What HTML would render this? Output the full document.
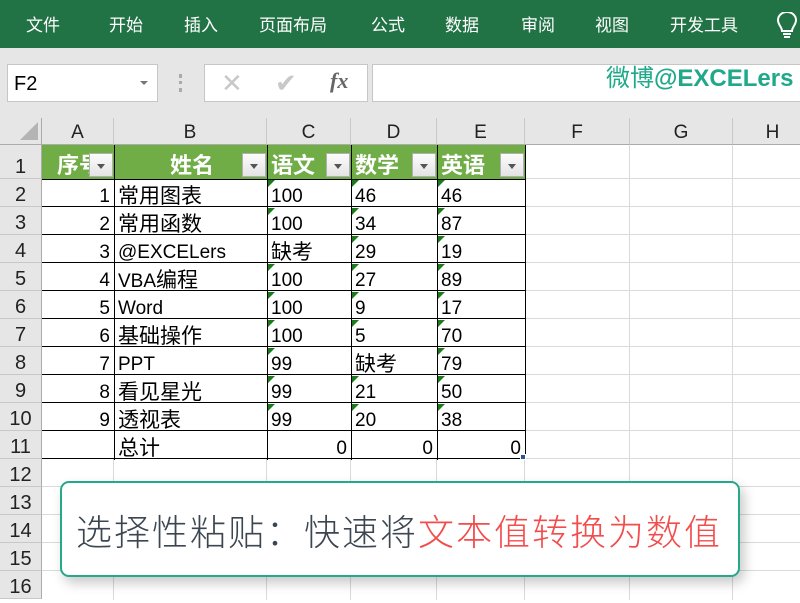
<!DOCTYPE html>
<html><head><meta charset="utf-8">
<style>
*{margin:0;padding:0;box-sizing:border-box}
body{width:800px;height:600px;overflow:hidden;background:#fff;position:relative;font-family:"Liberation Sans","Noto Sans CJK SC",sans-serif}
.a{position:absolute}
#rib{left:0;top:0;width:800px;height:48px;background:#217346}
.rt{position:absolute;top:15px;color:#fff;font-size:17px;line-height:22px}
#gray{left:0;top:48px;width:800px;height:70px;background:#e6e6e6}
.box{position:absolute;background:#fff;border:1px solid #c6c6c6}
.ch{position:absolute;top:118px;height:27px;background:#e6e6e6;border-right:1px solid #c8c8c8;border-bottom:1px solid #ababab;text-align:center;font-size:19px;line-height:30px;color:#222}
.rh{position:absolute;left:0;width:42px;height:28px;background:#e6e6e6;border-bottom:1px solid #c8c8c8;border-right:1px solid #ababab;text-align:center;font-size:20px;line-height:32px;color:#222}
.gv{position:absolute;top:145px;width:1px;height:455px;background:#dadada}
.gh{position:absolute;left:42px;width:758px;height:1px;background:#dadada}
.c{position:absolute;height:28px;font-size:19px;line-height:35px;color:#000;white-space:nowrap;overflow:hidden}
.z{font-size:21px}
.tri{position:absolute;width:0;height:0;border-top:7px solid #1b7b1b;border-right:7px solid transparent}
.dd{position:absolute;top:153px;width:24px;height:24px;background:linear-gradient(#fcfcfc,#e4e4e4);border:1px solid #b0b0b0}
.dd:after{content:"";position:absolute;left:7px;top:10px;border-top:5px solid #555;border-left:4.5px solid transparent;border-right:4.5px solid transparent}
.hd{position:absolute;top:145px;height:34px;color:#fff;font-size:22px;font-weight:bold;line-height:42px;white-space:nowrap;overflow:hidden}
</style></head><body>
<div id="rib" class="a"></div>
<div class="rt" style="left:26px">文件</div>
<div class="rt" style="left:109px">开始</div>
<div class="rt" style="left:184px">插入</div>
<div class="rt" style="left:259px">页面布局</div>
<div class="rt" style="left:371px">公式</div>
<div class="rt" style="left:445px">数据</div>
<div class="rt" style="left:521px">审阅</div>
<div class="rt" style="left:595px">视图</div>
<div class="rt" style="left:670px">开发工具</div>
<svg class="a" style="left:776px;top:12px" width="22" height="28" viewBox="0 0 22 28"><path d="M6 19 C6 15 2 13 2 8 A9 8 0 0 1 20 8 C20 13 16 15 16 19 Z M7 22 H15 M8 25 H14" fill="none" stroke="#fff" stroke-width="2"/></svg>
<div id="gray" class="a"></div>
<div class="box" style="left:7px;top:64px;width:151px;height:38px"></div>
<div class="a" style="left:14px;top:73px;font-size:20px">F2</div>
<div class="a" style="left:140px;top:81px;border-top:4px solid #777;border-left:4px solid transparent;border-right:4px solid transparent"></div>
<div class="a" style="left:179px;top:74px;width:3px;height:18px;border-left:3px dotted #aaa"></div>
<div class="box" style="left:204px;top:64px;width:164px;height:38px"></div>
<div class="a" style="left:221px;top:68px;font-size:26px;color:#c8c8c8">✕</div>
<div class="a" style="left:275px;top:68px;font-size:26px;color:#c8c8c8">✔</div>
<div class="a" style="left:330px;top:68px;font-size:22px;color:#666;font-family:'Liberation Serif',serif;font-style:italic;font-weight:bold">fx</div>
<div class="box" style="left:372px;top:64px;width:430px;height:38px"></div>
<div class="a" style="left:606px;top:64px;font-size:24px;color:#1fa88a;font-weight:bold;line-height:30px"><span style="font-weight:normal">微博</span>@EXCELers</div>
<div class="a" style="left:0;top:118px;width:42px;height:27px;background:#e6e6e6;border-right:1px solid #ababab;border-bottom:1px solid #ababab"></div>
<div class="a" style="left:20px;top:122px;border-bottom:18px solid #b4b4b4;border-left:18px solid transparent"></div>
<div class="ch" style="left:42px;width:72px">A</div>
<div class="ch" style="left:114px;width:153px">B</div>
<div class="ch" style="left:267px;width:84px">C</div>
<div class="ch" style="left:351px;width:86px">D</div>
<div class="ch" style="left:437px;width:88px">E</div>
<div class="ch" style="left:525px;width:105px">F</div>
<div class="ch" style="left:630px;width:103px">G</div>
<div class="ch" style="left:733px;width:80px">H</div>
<div class="rh" style="top:145px;height:34px;line-height:44px">1</div>
<div class="rh" style="top:179px">2</div><div class="rh" style="top:207px">3</div><div class="rh" style="top:235px">4</div><div class="rh" style="top:263px">5</div><div class="rh" style="top:291px">6</div><div class="rh" style="top:319px">7</div><div class="rh" style="top:347px">8</div><div class="rh" style="top:375px">9</div><div class="rh" style="top:403px">10</div><div class="rh" style="top:431px">11</div><div class="rh" style="top:459px">12</div><div class="rh" style="top:487px">13</div><div class="rh" style="top:515px">14</div><div class="rh" style="top:543px">15</div><div class="rh" style="top:571px">16</div>
<div class="gv" style="left:629px"></div><div class="gv" style="left:732px"></div>
<div class="gh" style="top:486px"></div><div class="gh" style="top:514px"></div><div class="gh" style="top:542px"></div><div class="gh" style="top:570px"></div>
<div class="gv" style="left:113px;top:459px;height:141px"></div><div class="gv" style="left:266px;top:459px;height:141px"></div><div class="gv" style="left:350px;top:459px;height:141px"></div><div class="gv" style="left:436px;top:459px;height:141px"></div><div class="gv" style="left:524px;top:459px;height:141px"></div>
<div class="gh" style="left:525px;width:275px;top:178px"></div><div class="gh" style="left:525px;width:275px;top:206px"></div><div class="gh" style="left:525px;width:275px;top:234px"></div><div class="gh" style="left:525px;width:275px;top:262px"></div><div class="gh" style="left:525px;width:275px;top:290px"></div><div class="gh" style="left:525px;width:275px;top:318px"></div><div class="gh" style="left:525px;width:275px;top:346px"></div><div class="gh" style="left:525px;width:275px;top:374px"></div><div class="gh" style="left:525px;width:275px;top:402px"></div><div class="gh" style="left:525px;width:275px;top:430px"></div><div class="gh" style="left:525px;width:275px;top:458px"></div>
<div class="a" style="left:42px;top:145px;width:483px;height:34px;background:#70ad47"></div>
<div class="a" style="left:42px;top:179px;width:484px;height:281px;background:
repeating-linear-gradient(to bottom,transparent 0,transparent 27px,#000 27px,#000 28px)"></div>
<div class="a" style="left:42px;top:179px;width:483px;height:1px;background:#000"></div>
<div class="a" style="left:114px;top:145px;width:1px;height:315px;background:#000"></div>
<div class="a" style="left:267px;top:145px;width:1px;height:315px;background:#000"></div>
<div class="a" style="left:351px;top:145px;width:1px;height:315px;background:#000"></div>
<div class="a" style="left:437px;top:145px;width:1px;height:315px;background:#000"></div>
<div class="a" style="left:525px;top:145px;width:1px;height:315px;background:#000"></div>
<div class="hd" style="left:57px;width:32px">序号</div>
<div class="hd" style="left:170px">姓名</div>
<div class="hd" style="left:271px">语文</div>
<div class="hd" style="left:355px">数学</div>
<div class="hd" style="left:441px">英语</div>
<div class="dd" style="left:89px"></div>
<div class="dd" style="left:242px"></div>
<div class="dd" style="left:326px"></div>
<div class="dd" style="left:412px"></div>
<div class="dd" style="left:500px"></div>
<div class="c" style="left:42px;width:68px;text-align:right;top:179px">1</div>
<div class="c" style="left:42px;width:68px;text-align:right;top:207px">2</div>
<div class="c" style="left:42px;width:68px;text-align:right;top:235px">3</div>
<div class="c" style="left:42px;width:68px;text-align:right;top:263px">4</div>
<div class="c" style="left:42px;width:68px;text-align:right;top:291px">5</div>
<div class="c" style="left:42px;width:68px;text-align:right;top:319px">6</div>
<div class="c" style="left:42px;width:68px;text-align:right;top:347px">7</div>
<div class="c" style="left:42px;width:68px;text-align:right;top:375px">8</div>
<div class="c" style="left:42px;width:68px;text-align:right;top:403px">9</div>
<div class="c z" style="left:118px;top:179px">常用图表</div>
<div class="c z" style="left:118px;top:207px">常用函数</div>
<div class="c" style="left:118px;top:235px">@EXCELers</div>
<div class="c" style="left:118px;top:263px">VBA<span class="z">编程</span></div>
<div class="c" style="left:118px;top:291px">Word</div>
<div class="c z" style="left:118px;top:319px">基础操作</div>
<div class="c" style="left:118px;top:347px">PPT</div>
<div class="c z" style="left:118px;top:375px">看见星光</div>
<div class="c z" style="left:118px;top:403px">透视表</div>
<div class="c z" style="left:118px;top:431px">总计</div>
<div class="c" style="left:271px;top:179px">100</div><div class="c" style="left:271px;top:207px">100</div><div class="c z" style="left:271px;top:235px">缺考</div><div class="c" style="left:271px;top:263px">100</div><div class="c" style="left:271px;top:291px">100</div><div class="c" style="left:271px;top:319px">100</div><div class="c" style="left:271px;top:347px">99</div><div class="c" style="left:271px;top:375px">99</div><div class="c" style="left:271px;top:403px">99</div>
<div class="c" style="left:355px;top:179px">46</div><div class="c" style="left:355px;top:207px">34</div><div class="c" style="left:355px;top:235px">29</div><div class="c" style="left:355px;top:263px">27</div><div class="c" style="left:355px;top:291px">9</div><div class="c" style="left:355px;top:319px">5</div><div class="c z" style="left:355px;top:347px">缺考</div><div class="c" style="left:355px;top:375px">21</div><div class="c" style="left:355px;top:403px">20</div>
<div class="c" style="left:441px;top:179px">46</div><div class="c" style="left:441px;top:207px">87</div><div class="c" style="left:441px;top:235px">19</div><div class="c" style="left:441px;top:263px">89</div><div class="c" style="left:441px;top:291px">17</div><div class="c" style="left:441px;top:319px">70</div><div class="c" style="left:441px;top:347px">79</div><div class="c" style="left:441px;top:375px">50</div><div class="c" style="left:441px;top:403px">38</div>
<div class="c" style="left:267px;width:80px;text-align:right;top:431px">0</div>
<div class="c" style="left:351px;width:82px;text-align:right;top:431px">0</div>
<div class="c" style="left:437px;width:84px;text-align:right;top:431px">0</div>
<div class="a" style="left:520px;top:454px;width:6px;height:6px;background:#2b579a;border:1px solid #fff"></div>
<div class="tri" style="left:268px;top:180px"></div><div class="tri" style="left:268px;top:208px"></div><div class="tri" style="left:268px;top:264px"></div><div class="tri" style="left:268px;top:292px"></div><div class="tri" style="left:268px;top:320px"></div><div class="tri" style="left:268px;top:348px"></div><div class="tri" style="left:268px;top:376px"></div><div class="tri" style="left:268px;top:404px"></div>
<div class="tri" style="left:352px;top:180px"></div><div class="tri" style="left:352px;top:208px"></div><div class="tri" style="left:352px;top:236px"></div><div class="tri" style="left:352px;top:264px"></div><div class="tri" style="left:352px;top:292px"></div><div class="tri" style="left:352px;top:320px"></div><div class="tri" style="left:352px;top:376px"></div><div class="tri" style="left:352px;top:404px"></div>
<div class="tri" style="left:438px;top:180px"></div><div class="tri" style="left:438px;top:208px"></div><div class="tri" style="left:438px;top:236px"></div><div class="tri" style="left:438px;top:264px"></div><div class="tri" style="left:438px;top:292px"></div><div class="tri" style="left:438px;top:320px"></div><div class="tri" style="left:438px;top:348px"></div><div class="tri" style="left:438px;top:376px"></div><div class="tri" style="left:438px;top:404px"></div>
<div class="a" style="left:60px;top:481px;width:680px;height:96px;background:#fff;border:2px solid #26a98b;border-radius:9px;box-shadow:4px 6px 12px rgba(0,0,0,0.22)"></div>
<div class="a" style="left:76px;top:504px;font-size:36px;line-height:52px;letter-spacing:2px;color:#3c4650;font-family:'Noto Sans CJK SC',sans-serif;font-weight:300;white-space:nowrap">选择性粘贴：快速将<span style="color:#f24c4c">文本值转换为数值</span></div>
</body></html>
